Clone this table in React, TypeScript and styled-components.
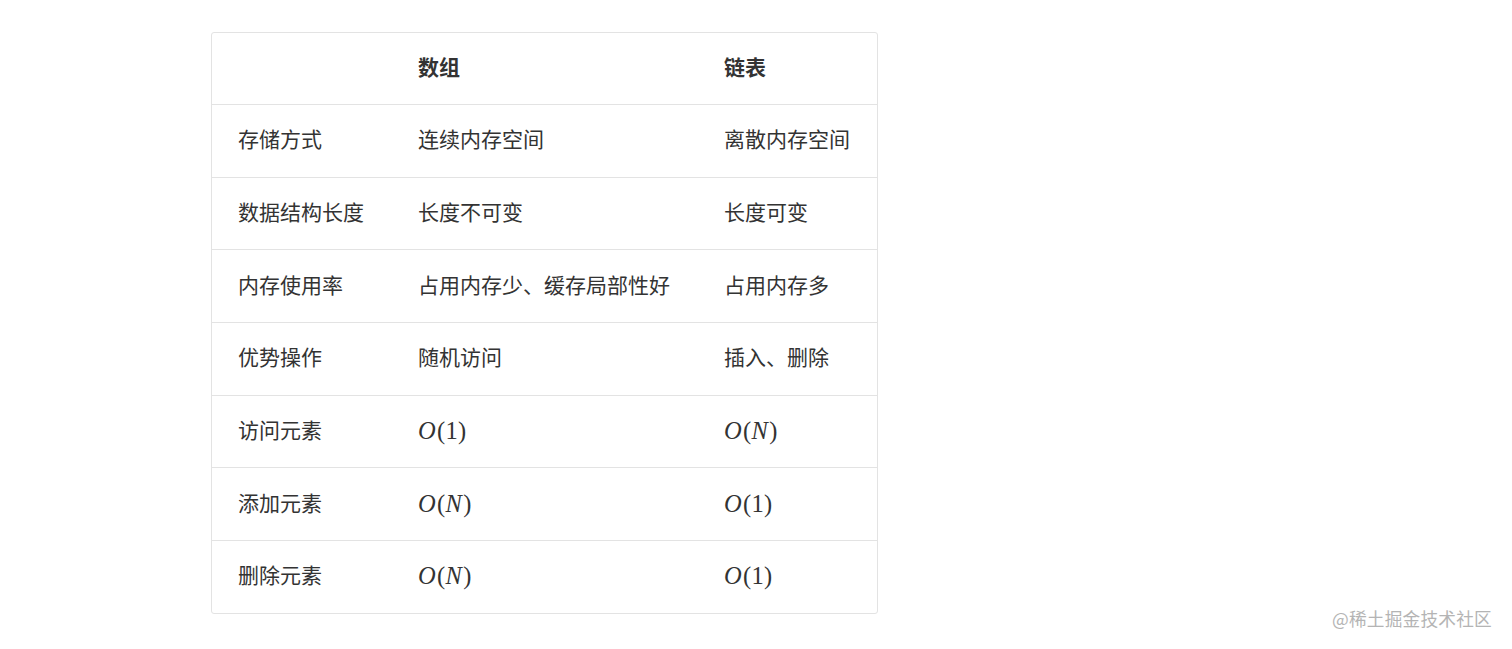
import styled, { createGlobalStyle } from "styled-components";

const GlobalStyle = createGlobalStyle`
  html, body {
    margin: 0;
    padding: 0;
    background: #ffffff;
  }
  body {
    font-family: "Noto Sans", "Noto Sans CJK SC", sans-serif;
  }
`;

const Page = styled.div`
  position: relative;
  width: 1512px;
  height: 649px;
  padding: 32px 0 0 211px;
  box-sizing: border-box;
`;

const Table = styled.table`
  width: 667px;
  border-collapse: separate;
  border-spacing: 0;
  border: 1px solid #e3e3e3;
  border-radius: 3px;
  table-layout: fixed;
  color: #333333;
  font-family: "Noto Sans CJK SC", "Noto Sans", sans-serif;
  font-size: 21px;
`;

const Cell = styled.td<{ $head?: boolean }>`
  height: ${(p) => (p.$head ? "71px" : "72.7px")};
  padding: 0 0 5px 26px;
  box-sizing: border-box;
  vertical-align: middle;
  white-space: nowrap;
  text-align: left;
  font-weight: ${(p) => (p.$head ? 700 : 400)};
  border-top: ${(p) => (p.$head ? "none" : "1px solid #e3e3e3")};
  line-height: 28px;
`;

const Math = styled.span`
  display: inline-block;
  padding-top: 4px;
  font-family: "Liberation Serif", "DejaVu Serif", serif;
  font-size: 24.5px;
  letter-spacing: 0.3px;
`;

const Var = styled.i`
  font-style: italic;
  padding-right: 1px;
`;

const Watermark = styled.div`
  position: absolute;
  right: 20px;
  bottom: 18px;
  color: #b4b4b4;
  font-family: "Noto Sans CJK SC", sans-serif;
  font-size: 17.7px;
  letter-spacing: 0.2px;
`;

function Big({ n }: { n: "1" | "N" }) {
  return (
    <Math>
      <Var>O</Var>(
      {n === "N" ? <Var>N</Var> : "1"})
    </Math>
  );
}

const rows: [string, React.ReactNode, React.ReactNode][] = [
  ["存储方式", "连续内存空间", "离散内存空间"],
  ["数据结构长度", "长度不可变", "长度可变"],
  ["内存使用率", "占用内存少、缓存局部性好", "占用内存多"],
  ["优势操作", "随机访问", "插入、删除"],
  ["访问元素", <Big n="1" />, <Big n="N" />],
  ["添加元素", <Big n="N" />, <Big n="1" />],
  ["删除元素", <Big n="N" />, <Big n="1" />],
];

export default function App() {
  return (
    <Page>
      <GlobalStyle />
      <Table>
        <colgroup>
          <col style={{ width: 180 }} />
          <col style={{ width: 306 }} />
          <col style={{ width: 179 }} />
        </colgroup>
        <thead>
          <tr>
            <Cell as="th" $head />
            <Cell as="th" $head>
              数组
            </Cell>
            <Cell as="th" $head>
              链表
            </Cell>
          </tr>
        </thead>
        <tbody>
          {rows.map(([a, b, c], i) => (
            <tr key={i}>
              <Cell>{a}</Cell>
              <Cell>{b}</Cell>
              <Cell>{c}</Cell>
            </tr>
          ))}
        </tbody>
      </Table>
      <Watermark>@稀土掘金技术社区</Watermark>
    </Page>
  );
}
